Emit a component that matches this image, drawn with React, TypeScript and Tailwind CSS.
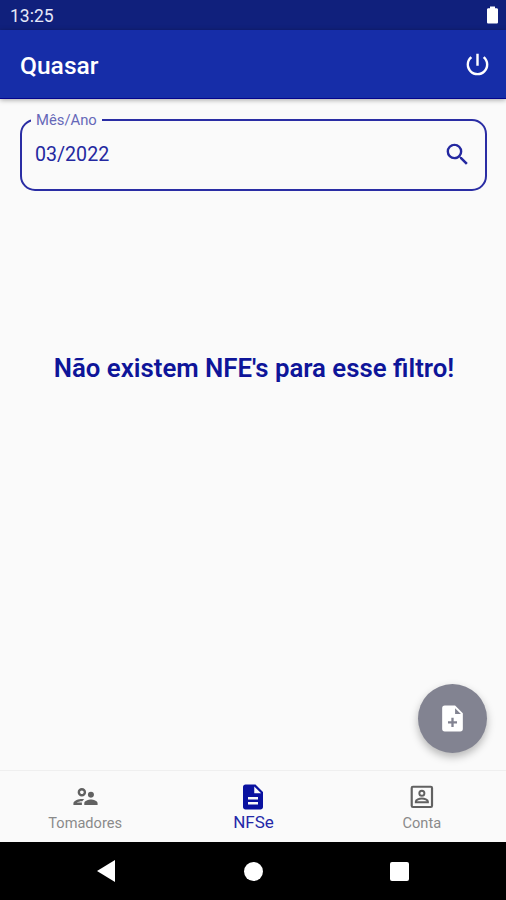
import { MdDescription, MdOutlineSupervisorAccount, MdPowerSettingsNew, MdSearch } from "react-icons/md";

function AccountBoxIcon({ size }: { size: number }) {
  return (
    <svg width={size} height={size} viewBox="0 0 24 24" fill="none" stroke="currentColor" aria-hidden="true">
      <rect x="3.9" y="3.9" width="16.8" height="16.8" rx="1" strokeWidth="1.8" />
      <circle cx="12.3" cy="9.3" r="2.1" strokeWidth="1.6" />
      <path d="M7.300 16.700v-.5c0-1.500 2.800-2.500 5-2.500s5 1 5 2.500v.5z" strokeWidth="1.6" />
    </svg>
  );
}

function FilePlusIcon({ size }: { size: number }) {
  return (
    <svg width={size} height={size} viewBox="0 0 24 24" fill="currentColor" aria-hidden="true">
      <path
        fillRule="evenodd"
        d="M6 2h8l6 6v12a2 2 0 0 1-2 2H6a2 2 0 0 1-2-2V4a2 2 0 0 1 2-2zM14 4v4.500h4.500zM11.100 11.500v2.600H8.500v1.800h2.600v2.600h1.800v-2.600h2.600v-1.800h-2.600v-2.600z"
      />
    </svg>
  );
}

const tabs = [
  { label: "Tomadores", icon: MdOutlineSupervisorAccount, active: false },
  { label: "NFSe", icon: MdDescription, active: true },
  { label: "Conta", icon: AccountBoxIcon, active: false },
];

function StatusBar() {
  return (
    <div className="flex h-[30px] shrink-0 items-center justify-between bg-[#10207c] pl-[10px] pr-2 text-white">
      <span className="pt-[3px] text-[17.5px] leading-none text-[#e6e8f8]">13:25</span>
      <svg width="11" height="18" viewBox="0 0 11 18" fill="currentColor" aria-hidden="true">
        <path d="M3 0.6h5v1.6h1.6c.8 0 1.4.6 1.4 1.4v12.6c0 .8-.6 1.4-1.4 1.4H1.4C.6 17.6 0 17 0 16.200V3.600c0-.8.6-1.4 1.400-1.400H3z" />
      </svg>
    </div>
  );
}

function AppBar() {
  return (
    <header className="relative flex h-[69px] shrink-0 items-center justify-between border-b border-[#04048c] bg-[#162da8] pl-5 pr-[14px] text-white shadow-[0_1px_5px_rgba(0,0,0,0.35)]">
      <h1 className="pt-1 text-[24.6px] font-medium leading-[26px]">Quasar</h1>
      <button type="button" aria-label="Sair">
        <MdPowerSettingsNew size={29} />
      </button>
    </header>
  );
}

function MonthField() {
  return (
    <fieldset className="ml-5 mr-[19px] mt-3 h-[80px] rounded-[15px] border-2 border-[#2a2da4] pl-[9px] text-[#2428a0]">
      <legend className="h-[18px] px-[5px] text-[14.8px] leading-[18px] text-[#6668b8]">Mês/Ano</legend>
      <div className="flex items-center justify-between pl-1 pr-[13px] pt-[10px]">
        <span className="pt-0.5 text-[19.6px] leading-none">03/2022</span>
        <button type="button" aria-label="Buscar" className="pt-px">
          <MdSearch size={29} />
        </button>
      </div>
    </fieldset>
  );
}

function TabBar() {
  return (
    <nav className="grid h-[72px] shrink-0 grid-cols-3 border-t border-[#efefef] bg-[#fafafa] pl-px">
      {tabs.map(({ label, icon: Icon, active }) => (
        <button
          key={label}
          type="button"
          className={`flex flex-col items-center pt-[11px] ${active ? "text-[#0a12a0]" : "text-[#616161]"}`}
        >
          <Icon size={active ? 30 : 29} />
          <span className={active ? "text-[17px] leading-[20px] text-[#2428a8]" : "mt-[2px] text-[14.6px] leading-[20px] text-[#8a8a8a]"}>
            {label}
          </span>
        </button>
      ))}
    </nav>
  );
}

// Android system navigation: back, home, recents
function SystemNav() {
  return (
    <div className="grid h-[58px] shrink-0 grid-cols-[212px_83px_209px] items-center justify-items-center bg-black text-white">
      <svg width="18" height="22" viewBox="0 0 18 22" fill="currentColor" aria-label="Voltar">
        <path d="M18 0v22L0 11z" />
      </svg>
      <span className="size-[19px] rounded-full bg-white" />
      <span className="size-[19px] rounded-[2px] bg-white" />
    </div>
  );
}

export default function App() {
  return (
    <div className="flex h-[900px] w-[506px] flex-col overflow-hidden bg-[#fafafa] font-[Roboto,sans-serif]">
      <StatusBar />
      <AppBar />
      <main className="relative flex-1">
        <MonthField />
        <p className="mt-[161px] pl-0.5 text-center text-[25.800px] font-semibold leading-[32px] text-[#0e1599]">
          Não existem NFE's para esse filtro!
        </p>
        <button
          type="button"
          aria-label="Nova NFSe"
          className="absolute bottom-[17px] right-[19px] flex size-[69px] items-center justify-center rounded-full bg-[#828391] text-white shadow-[0_4px_8px_rgba(0,0,0,0.28)]"
        >
          <FilePlusIcon size={31} />
        </button>
      </main>
      <TabBar />
      <SystemNav />
    </div>
  );
}
